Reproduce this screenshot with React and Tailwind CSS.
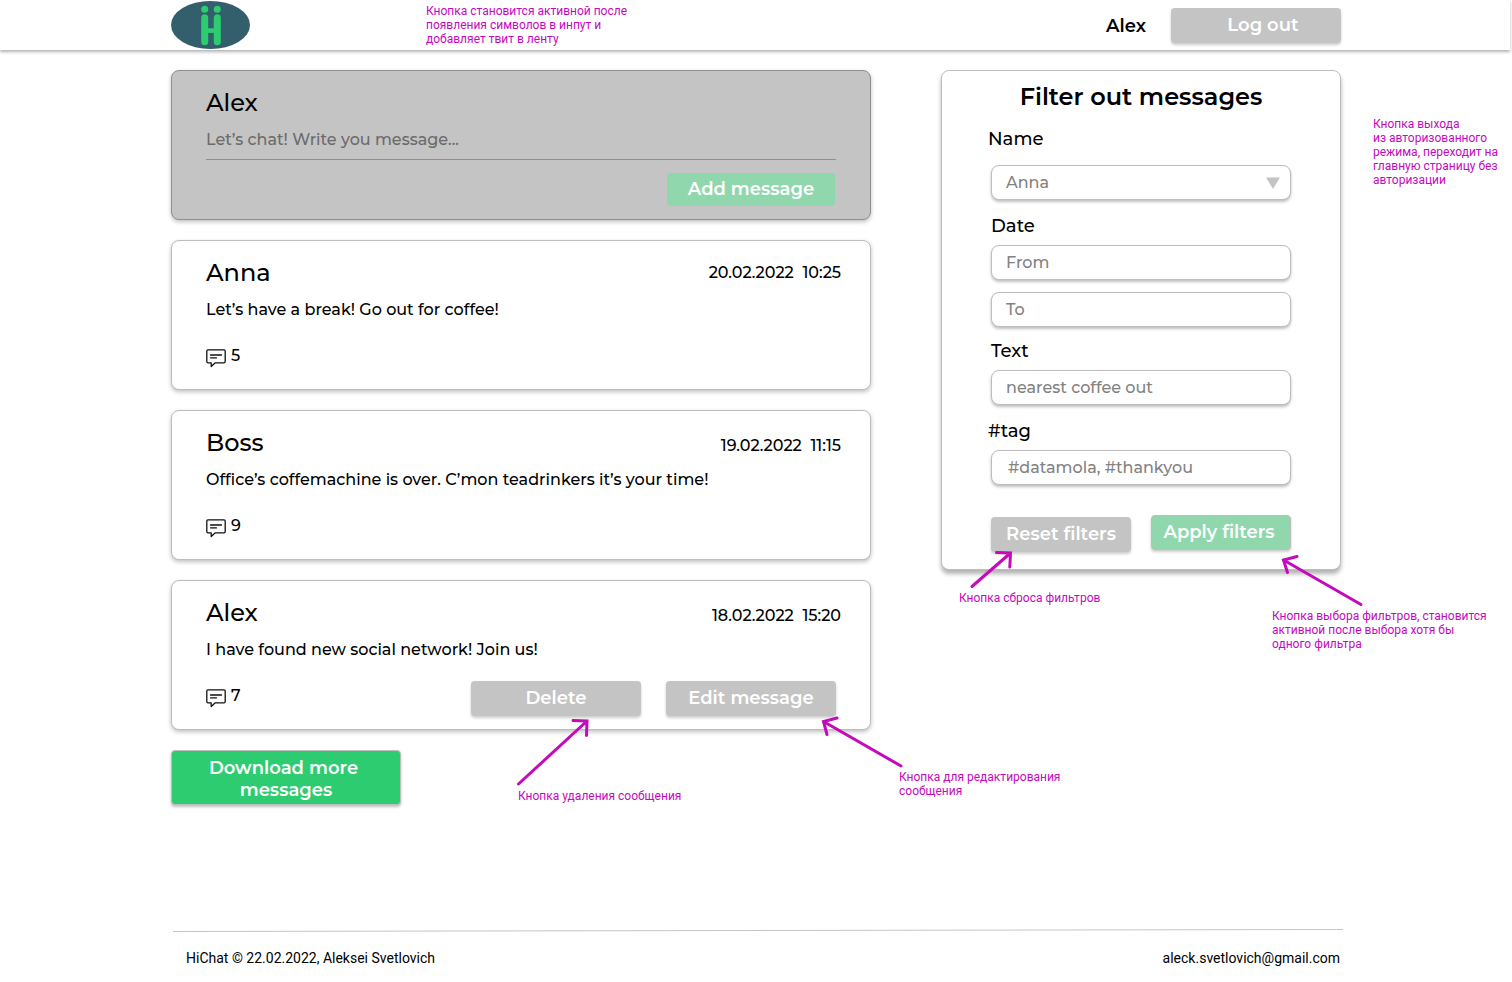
import React from "react";

const heading = "text-[24px] leading-[30px]";
const field =
  "block h-[35px] w-full rounded-[8px] border border-[#bdbdbd] bg-white px-[14px] text-[16px] text-[#828282] shadow-[0_2px_3px_rgba(0,0,0,0.25)] outline-none placeholder:text-[#828282]";
const label = "block text-[18px] leading-[22px]";
const greyButton =
  "h-[35px] rounded-[4px] bg-[#c4c4c4] text-[18px] leading-[22px] font-semibold text-white shadow-[0_2px_3px_rgba(0,0,0,0.2)] pb-px";
const note =
  "font-['Roboto',sans-serif] text-[12px] leading-[14px] font-normal whitespace-nowrap text-[#c40abb]";

function Logo() {
  return (
    <svg width="79" height="50" viewBox="0 0 79 50" role="img" aria-label="HiChat">
      <ellipse cx="39.5" cy="25" rx="39.5" ry="24" fill="#335f6d" />
      <g fill="#2ecc71">
        <circle cx="33.7" cy="9.3" r="3.5" />
        <circle cx="46.3" cy="9.3" r="3.5" />
        <rect x="30.2" y="14.3" width="7" height="31" rx="3.5" />
        <rect x="42.8" y="14.3" width="7" height="31" rx="3.5" />
        <rect x="35" y="28.3" width="10" height="4.6" />
      </g>
    </svg>
  );
}

function CommentIcon() {
  return (
    <svg width="20" height="20" viewBox="0 0 20 20" fill="none" stroke="#111" strokeWidth="1.3" strokeLinejoin="round" strokeLinecap="round" aria-hidden="true">
      <path d="M2 1.800h16a1.200 1.200 0 0 1 1.200 1.200v10.600a1.200 1.200 0 0 1-1.200 1.200H9.300L5.200 18.600V14.800H2A1.200 1.200 0 0 1 .8 13.600V3A1.200 1.200 0 0 1 2 1.800Z" />
      <path d="M4.500 7h11M4.500 9.800h6" />
    </svg>
  );
}

function Arrow({ d, className, width, height }) {
  return (
    <svg className={`pointer-events-none absolute ${className}`} width={width} height={height} fill="none" stroke="#c40abb" strokeWidth="3" strokeLinecap="round" aria-hidden="true">
      <path d={d} />
    </svg>
  );
}

const messages = [
  { author: "Anna", date: "20.02.2022", time: "10:25", text: "Let’s have a break! Go out for coffee!", comments: 5, align: "items-center" },
  { author: "Boss", date: "19.02.2022", time: "11:15", text: "Office’s coffemachine is over. C’mon teadrinkers it’s your time!", comments: 9, align: "items-end" },
  { author: "Alex", date: "18.02.2022", time: "15:20", text: "I have found new social network! Join us!", comments: 7, align: "items-end", own: true },
];

function Message({ message }) {
  return (
    <article className="relative min-h-[150px] rounded-[8px] border border-[#bdbdbd] bg-white px-[34px] pt-[17px] shadow-[0_2px_4px_rgba(0,0,0,0.25)]">
      <div className={`-mr-[5px] flex justify-between ${message.align}`}>
        <h2 className={heading}>{message.author}</h2>
        <time className="pb-px text-[16px] leading-[22px] whitespace-pre">{message.date + "  " + message.time}</time>
      </div>
      <p className="mt-[10px] text-[16px] leading-6">{message.text}</p>
      <div className="mt-[19px] flex items-start justify-between">
        <div className="flex items-start gap-[5px] pt-1 text-[16px] leading-[22px]">
          <span className="pt-[3px]">
            <CommentIcon />
          </span>
          <span>{message.comments}</span>
        </div>
        {message.own && (
          <div className="flex gap-[25px]">
            <button type="button" className={`w-[170px] ${greyButton}`}>Delete</button>
            <button type="button" className={`w-[170px] ${greyButton}`}>Edit message</button>
          </div>
        )}
      </div>
      {message.own && (
        <>
          <Arrow className="top-[129px] left-[338px]" width="90" height="80" d="M8.500 74 77 11M63 10.500l14 .5-.5 14.500" />
          <p className={`absolute top-[208px] left-[346px] ${note}`}>Кнопка удаления сообщения</p>
          <Arrow className="top-[129px] left-[642px]" width="100" height="65" d="M87 56 9.500 11.500M23 8 9.500 11.500l3.500 13" />
          <p className={`absolute top-[189px] left-[727px] ${note}`}>
            Кнопка для редактирования
            <br />
            сообщения
          </p>
        </>
      )}
    </article>
  );
}

function Filters() {
  return (
    <aside className="relative h-[500px] w-[400px] shrink-0 rounded-[8px] border border-[#bdbdbd] bg-white px-[49px] pt-[11px] shadow-[0_4px_4px_rgba(0,0,0,0.3)]">
      <form onSubmit={(event) => event.preventDefault()}>
        <h2 className={`text-center font-semibold ${heading}`}>Filter out messages</h2>
        <label htmlFor="name" className={`mt-4 -ml-[3px] ${label}`}>Name</label>
        <div className="relative mt-[15px]">
          <select id="name" className={`appearance-none ${field}`} defaultValue="Anna">
            <option>Anna</option>
            <option>Boss</option>
            <option>Alex</option>
          </select>
          <svg className="pointer-events-none absolute top-3 right-[11px]" width="14" height="12" aria-hidden="true">
            <path d="M0 .5h14L7 12Z" fill="#c4c4c4" />
          </svg>
        </div>
        <label htmlFor="from" className={`mt-[15px] ${label}`}>Date</label>
        <input id="from" className={`mt-2 ${field}`} placeholder="From" />
        <input aria-label="Date to" className={`mt-3 ${field}`} placeholder="To" />
        <label htmlFor="text" className={`mt-[13px] ${label}`}>Text</label>
        <input id="text" className={`mt-2 ${field}`} placeholder="nearest coffee out" />
        <label htmlFor="tag" className={`mt-[15px] -ml-[3px] ${label}`}>#tag</label>
        <input id="tag" className={`mt-2 indent-[2px] ${field}`} placeholder="#datamola, #thankyou" />
        <div className="mt-[30px] flex items-start justify-between">
          <button type="reset" className={`mt-[2px] w-[140px] ${greyButton}`}>Reset filters</button>
          <button type="submit" className="h-[35px] w-[140px] rounded-[4px] border border-[#bdbdbd] bg-[#90d7ad] pr-1 pb-[2px] text-[18px] leading-[22px] font-semibold text-white shadow-[0_2px_3px_rgba(0,0,0,0.2)]">
            Apply filters
          </button>
        </div>
      </form>
      <p className={`absolute top-[46px] left-[431px] ${note}`}>
        Кнопка выхода
        <br />
        из авторизованного
        <br />
        режима, переходит на
        <br />
        главную страницу без
        <br />
        авторизации
      </p>
      <Arrow className="top-[469px] left-[18px]" width="60" height="55" d="M12 46.500 50.500 13M36.500 12.500l14 .5-.7 14" />
      <p className={`absolute top-[520px] left-[17px] ${note}`}>Кнопка сброса фильтров</p>
      <Arrow className="top-[477px] left-[332px]" width="100" height="65" d="M87 56.500 9.500 12M23 8.500 9.500 12l4 12.500" />
      <p className={`absolute top-[538px] left-[330px] ${note}`}>
        Кнопка выбора фильтров, становится
        <br />
        активной после выбора хотя бы
        <br />
        одного фильтра
      </p>
    </aside>
  );
}

export default function App() {
  return (
    <div className="flex min-h-screen flex-col overflow-x-hidden bg-white font-['Montserrat','Inter',sans-serif] font-medium text-black">
      <header className="mr-0.5 bg-white pl-0.5 shadow-[0_2px_3px_rgba(0,0,0,0.3)]">
        <div className="mx-auto flex h-[50px] max-w-[1170px] items-center">
          <a href="#" className="block"><Logo /></a>
          <p className={`ml-44 ${note}`}>
            Кнопка становится активной после
            <br />
            появления символов в инпут и
            <br />
            добавляет твит в ленту
          </p>
          <span className="ml-auto pt-0.5 text-[18px] font-semibold">Alex</span>
          <button type="button" className={`ml-[25px] w-[170px] pl-[14px] ${greyButton}`}>Log out</button>
        </div>
      </header>

      <main className="mx-auto flex w-full max-w-[1170px] items-start justify-between pt-5">
        <div className="flex w-[700px] flex-col gap-5">
          <form
            className="flex h-[150px] flex-col rounded-[8px] border border-[#8f8f8f] bg-[#c4c4c4] px-[34px] pt-[17px] shadow-[0_2px_4px_rgba(0,0,0,0.25)]"
            onSubmit={(event) => event.preventDefault()}
          >
            <h2 className={heading}>Alex</h2>
            <input
              aria-label="Message"
              className="mt-[2px] h-10 w-full border-b border-[#8f8f8f] bg-transparent text-[16px] text-[#6b6b6b] outline-none placeholder:text-[#6b6b6b]"
              placeholder="Let’s chat! Write you message..."
            />
            <button type="submit" className="mt-[13px] mr-px h-[33px] w-[168px] self-end rounded-[3px] bg-[#90d7ad] pb-[2px] text-[18px] leading-[22px] font-semibold text-white">
              Add message
            </button>
          </form>
          {messages.map((message) => (
            <Message key={message.date} message={message} />
          ))}
          <button type="button" className="h-[55px] w-[230px] rounded-[4px] border border-[#bdbdbd] bg-[#2ecc71] pt-[2px] text-[18px] leading-[22px] font-semibold text-white shadow-[0_2px_3px_rgba(0,0,0,0.25)]">
            Download more&nbsp;
            <br />
            messages
          </button>
        </div>
        <Filters />
      </main>

      <footer className="mx-auto mt-auto w-full max-w-[1170px] font-['Roboto',sans-serif] text-[14px] leading-4 font-normal">
        <svg className="ml-0.5 block h-[3px] w-full" viewBox="0 0 1170 3" preserveAspectRatio="none" aria-hidden="true">
          <path d="M0 2.500 1170 .5" stroke="#c4c4c4" />
        </svg>
        <div className="flex justify-between pt-[18px] pr-px pb-4 pl-[15px]">
          <p>HiChat © 22.02.2022, Aleksei Svetlovich</p>
          <a href="mailto:aleck.svetlovich@gmail.com">aleck.svetlovich@gmail.com</a>
        </div>
      </footer>
    </div>
  );
}
